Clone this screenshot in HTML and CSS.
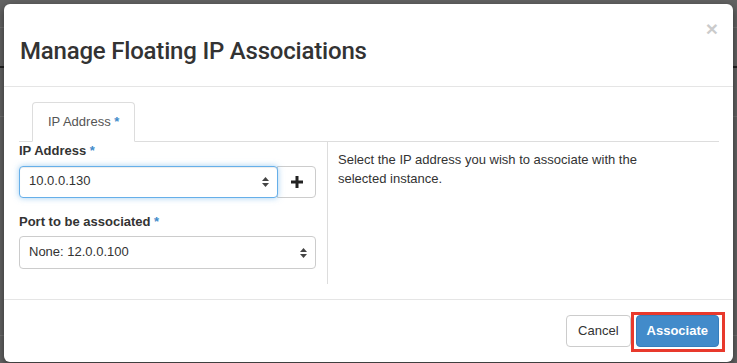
FILE: index.html
```html
<!DOCTYPE html>
<html lang="en">

    <head>
        <meta charset="UTF-8">
        <meta name="viewport" content="width=device-width, initial-scale=1.0">
        <title>Manage Floating IP Associations</title>
        <link rel="stylesheet" href="styles.css">
    </head>

    <body>
        <div class="modal">
            <div class="modal-header">
                <h3 class="modal-title">Manage Floating IP Associations</h3>
                <button class="close">&times;</button>
            </div>

            <div class="modal-body">
                <ul class="nav-tabs">
                    <li class="tab active">IP Address <span class="req">*</span></li>
                </ul>

                <div class="tab-pane">
                    <div class="left-col">
                        <div class="form-group">
                            <label>IP Address <span class="req">*</span></label>
                            <div class="input-group">
                                <div class="select focus">
                                    <span>10.0.0.130</span>
                                    <svg class="arrows" width="7" height="10" viewBox="0 0 7 10">
                                        <polygon points="3.5,0 7,4 0,4" fill="#444" />
                                        <polygon points="0,6 7,6 3.5,10" fill="#444" />
                                    </svg>
                                </div>
                                <button class="btn-add">
                                    <svg width="12" height="12" viewBox="0 0 12 12">
                                        <rect x="0" y="4.5" width="12" height="3" fill="#222" />
                                        <rect x="4.5" y="0" width="3" height="12" fill="#222" />
                                    </svg>
                                </button>
                            </div>
                        </div>
                        <div class="form-group">
                            <label>Port to be associated <span class="req">*</span></label>
                            <div class="select">
                                <span>None: 12.0.0.100</span>
                                <svg class="arrows" width="7" height="10" viewBox="0 0 7 10">
                                    <polygon points="3.5,0 7,4 0,4" fill="#444" />
                                    <polygon points="0,6 7,6 3.5,10" fill="#444" />
                                </svg>
                            </div>
                        </div>
                    </div>
                    <div class="right-col">
                        <p>Select the IP address you wish to associate with the selected instance.</p>
                    </div>
                </div>
            </div>

            <div class="modal-footer">
                <button class="btn btn-default">Cancel</button>
                <button class="btn btn-primary marked">Associate</button>
            </div>
        </div>
    </body>

</html>
```

FILE: styles.css
```css
body {
    margin: 0;
    padding: 4px;
    height: 363px;
    box-sizing: border-box;
    overflow: hidden;
    font-family: "Liberation Sans", Arial, sans-serif;
    font-size: 13px;
    line-height: 1.428571;
    color: #333;
    background-color: #636363;
    background-image:
        linear-gradient(to bottom, transparent 27px, #737373 27px, #737373 28px, transparent 28px),
        linear-gradient(to bottom, transparent 66px, #222 66px, #222 68px, transparent 68px),
        linear-gradient(to bottom, transparent 116px, #737373 116px, #737373 117px, transparent 117px),
        linear-gradient(to bottom, transparent 335px, #737373 335px, #737373 336px, transparent 336px);
}

.modal {
    width: 729px;
    background-color: #fff;
    border-radius: 6px;
    box-shadow: 0 3px 9px rgba(0, 0, 0, 0.5);
}

.modal-header {
    display: flex;
    justify-content: space-between;
    align-items: flex-start;
    padding: 14px 15px 22px 16px;
    border-bottom: 1px solid #e5e5e5;
}

.modal-title {
    margin: 20px 0 0 0;
    font-family: Roboto, "Liberation Sans", sans-serif;
    font-weight: 500;
    font-size: 24px;
    line-height: 26px;
    letter-spacing: -0.2px;
    color: #333;
}

.close {
    padding: 0;
    border: 0;
    background: none;
    font-family: "Liberation Sans", Arial, sans-serif;
    font-size: 21px;
    font-weight: bold;
    line-height: 21px;
    color: #000;
    opacity: 0.2;
    cursor: pointer;
}

.modal-body {
    padding: 15px 14px 15px 15px;
}

.nav-tabs {
    display: flex;
    list-style: none;
    margin: 0;
    padding: 0 0 0 13px;
    border-bottom: 1px solid #ddd;
}

.tab {
    margin-bottom: -1px;
    padding: 10px 15px;
    line-height: 18px;
    color: #555;
    background-color: #fff;
    border: 1px solid #ddd;
    border-bottom-color: transparent;
    border-radius: 4px 4px 0 0;
}

.req {
    color: #428bca;
    font-weight: bold;
}

.tab-pane {
    display: grid;
    grid-template-columns: 309px 1fr;
}

.left-col {
    padding-right: 11px;
    border-right: 1px solid #ddd;
}

.form-group {
    margin-bottom: 15px;
}

label {
    display: block;
    margin-bottom: 5px;
    font-weight: bold;
}

.input-group {
    display: flex;
}

.select {
    flex: 1;
    display: flex;
    justify-content: space-between;
    align-items: center;
    height: 31px;
    padding: 0 8px 0 9px;
    border: 1px solid #ccc;
    border-radius: 4px;
    background-color: #fff;
    color: #333;
}

.select.focus {
    position: relative;
    z-index: 2;
    height: 30px;
    border-color: #66afe9;
    box-shadow: inset 0 1px 1px rgba(0, 0, 0, 0.075), 0 0 6px rgba(102, 175, 233, 0.6);
}

.arrows {
    display: block;
}

.btn-add {
    display: flex;
    align-items: center;
    justify-content: center;
    width: 39px;
    height: 32px;
    margin-left: -1px;
    padding: 0;
    border: 1px solid #ccc;
    border-radius: 0 4px 4px 0;
    background-color: #fff;
}

.right-col {
    padding: 9px 50px 0 10px;
}

.right-col p {
    margin: 0;
}

.modal-footer {
    display: flex;
    justify-content: flex-end;
    gap: 5px;
    padding: 15px 14px 15px 15px;
    border-top: 1px solid #e5e5e5;
}

.btn {
    padding: 6px 11px;
    font-family: "Liberation Sans", Arial, sans-serif;
    font-size: 13px;
    line-height: 18px;
    border: 1px solid #ccc;
    border-radius: 4px;
    cursor: pointer;
}

.btn-default {
    background-color: #fff;
    color: #333;
}

.btn-primary {
    padding: 6px 10px;
    background-color: #428bca;
    border-color: #357ebd;
    color: #fff;
    font-weight: bold;
}

.marked {
    position: relative;
}

.marked::after {
    content: "";
    position: absolute;
    left: -6px;
    top: -4px;
    right: -7px;
    bottom: -6px;
    border: 3px solid #e8392c;
}
```
